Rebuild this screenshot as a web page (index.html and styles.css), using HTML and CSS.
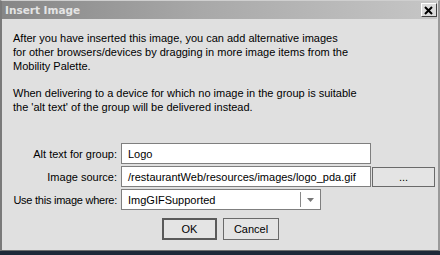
FILE: index.html
```html
<!DOCTYPE html>
<html>
<head>
<meta charset="utf-8">
<link rel="stylesheet" href="styles.css">
</head>
<body>
<div class="window">
  <div class="titlebar">
    <span class="title">Insert Image</span>
    <span class="close"><svg width="10" height="9" viewBox="0 0 10 9"><path d="M1 1 L8 8 M8 1 L1 8" stroke="#000" stroke-width="2" fill="none"/></svg></span>
  </div>
  <div class="content">
    <p class="para">After you have inserted this image, you can add alternative images<br>for other browsers/devices by dragging in more image items from the<br>Mobility Palette.</p>
    <p class="para">When delivering to a device for which no image in the group is suitable<br>the 'alt text' of the group will be delivered instead.</p>
    <div class="form">
      <label class="label">Alt text for group:</label>
      <div class="field wide">Logo</div>
      <span></span>
      <label class="label">Image source:</label>
      <div class="field wide">/restaurantWeb/resources/images/logo_pda.gif</div>
      <div class="btn browse">...</div>
      <label class="label tight">Use this image where:</label>
      <div class="select"><span class="seltext">ImgGIFSupported</span><span class="arrow"><svg width="7" height="4" viewBox="0 0 7 4"><path d="M0 0 H7 L3.5 4 Z" fill="#777"/></svg></span></div>
      <span></span>
    </div>
    <div class="buttons">
      <div class="btn ok">OK</div>
      <div class="btn cancel">Cancel</div>
    </div>
  </div>
</div>
<div class="taskbar"></div>
</body>
</html>
```
FILE: styles.css
```css
html, body {
  margin: 0;
  padding: 0;
  background: #1e2838;
}
body {
  width: 440px;
  height: 255px;
  overflow: hidden;
  font-family: "Liberation Sans", Arial, sans-serif;
  font-size: 11px;
  color: #000;
}
.window {
  width: 440px;
  height: 251px;
  box-sizing: border-box;
  background: #e0e0e0;
  border: 1px solid #6e6e6e;
  border-top-color: #cfcfcf;
  border-left: 2px solid #7a7a7a;
  border-right: 2px solid #9a9a9a;
  display: flex;
  flex-direction: column;
}
.titlebar {
  height: 18px;
  margin: 0 1px 0 0;
  background: linear-gradient(to right, #868686, #a8a8a8 45%, #c6c6c6);
  display: flex;
  align-items: center;
  justify-content: space-between;
  padding: 0 0 0 3px;
}
.title {
  font-family: "DejaVu Sans", sans-serif;
  font-weight: bold;
  font-size: 10.5px;
  color: #e4e4e4;
}
.close {
  width: 14px;
  height: 12px;
  background: #dcdcdc;
  border: 1px solid;
  border-color: #ffffff #404040 #404040 #ffffff;
  display: flex;
  align-items: center;
  justify-content: center;
}
.content {
  padding: 12px 0 0 11px;
  flex: 1;
}
.para {
  margin: 0 0 13px 0;
  line-height: 14px;
}
.form {
  margin-top: 29px;
  display: grid;
  grid-template-columns: 104px 250px 62px;
  column-gap: 4px;
  row-gap: 2px;
  align-items: center;
}
.label {
  text-align: right;
  white-space: nowrap;
}
.tight {
  letter-spacing: -0.25px;
}
.field, .select {
  height: 21px;
  box-sizing: border-box;
  background: #fff;
  border: 1px solid #7f7f7f;
  display: flex;
  align-items: center;
  padding-left: 6px;
}
.select {
  width: 200px;
  padding-left: 0;
}
.seltext {
  flex: 1;
  padding-left: 6px;
}
.arrow {
  width: 19px;
  height: 15px;
  border-left: 1px solid #888;
  display: flex;
  align-items: center;
  justify-content: center;
}
.btn {
  box-sizing: border-box;
  background: #e4e4e4;
  border: 1px solid #6a6a6a;
  display: flex;
  align-items: center;
  justify-content: center;
}
.browse {
  height: 20px;
  width: 63px;
  margin-left: -3px;
}
.buttons {
  display: flex;
  gap: 6px;
  margin: 8px 0 0 149px;
}
.ok {
  width: 55px;
  height: 22px;
  border: 2px solid #5a5a5a;
}
.cancel {
  width: 56px;
  height: 22px;
}
.taskbar {
  height: 4px;
  background: #1e2838;
}
```
